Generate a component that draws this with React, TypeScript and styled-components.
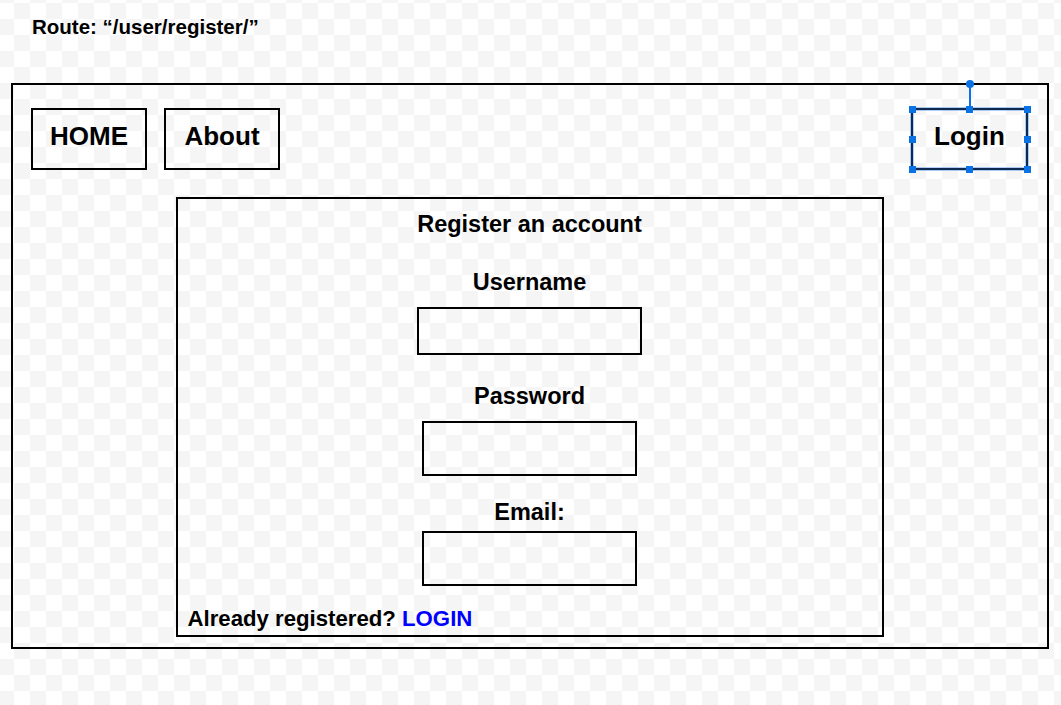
import React from 'react';
import styled, { createGlobalStyle } from 'styled-components';

const GlobalStyle = createGlobalStyle`
  html, body {
    margin: 0;
    padding: 0;
  }
  body {
    min-height: 100vh;
    font-family: "Liberation Sans", Arial, sans-serif;
    color: #000;
    background-color: #fff;
    background-image: repeating-conic-gradient(#f5f5f5 0 25%, #ffffff 0 50%);
    background-size: 32px 32px;
    background-position: -2px 3px;
  }
`;

const handles: [number, number][] = [
  [0, 0], [50, 0], [100, 0],
  [0, 50], [100, 50],
  [0, 100], [50, 100], [100, 100],
];

export default function App() {
  return (
    <>
      <GlobalStyle />
      <Div_Page>
        <H1_Route>Route: “/user/register/”</H1_Route>
        <Div_Frame>
          <Nav_Bar>
            <Div_NavGroup>
              <Button_Nav type="button">HOME</Button_Nav>
              <Button_Nav type="button">About</Button_Nav>
            </Div_NavGroup>
            <Button_Nav type="button" $width={117}>
              Login
              <Div_Selection>
                <Span_RotateLine />
                <Span_RotateKnob />
                {handles.map(([x, y]) => (
                  <Span_Handle key={`${x}-${y}`} $x={x} $y={y} />
                ))}
              </Div_Selection>
            </Button_Nav>
          </Nav_Bar>

          <Form_Panel onSubmit={(e) => e.preventDefault()}>
            <H2_Title>Register an account</H2_Title>

            <Label_Field $top={31}>Username</Label_Field>
            <Input_Box type="text" $top={11} $width={225} $height={48} />

            <Label_Field $top={28}>Password</Label_Field>
            <Input_Box type="password" $top={11} $width={215} $height={55} />

            <Label_Field $top={23}>Email:</Label_Field>
            <Input_Box type="email" $top={5} $width={215} $height={55} />

            <P_Footer>
              Already registered? <A_Login href="#">LOGIN</A_Login>
            </P_Footer>
          </Form_Panel>
        </Div_Frame>
      </Div_Page>
    </>
  );
}

const Div_Page = styled.div`
  display: flex;
  flex-direction: column;
  padding: 15px 0 0 11px;
`;

const H1_Route = styled.h1`
  margin: 0;
  padding-left: 21px;
  font-size: 20.5px;
  font-weight: 700;
  line-height: normal;
`;

const Div_Frame = styled.div`
  box-sizing: border-box;
  width: 1038px;
  height: 566px;
  margin-top: 44px;
  border: 2px solid #000;
  padding: 23px 19px 0 18px;
  display: flex;
  flex-direction: column;
`;

const Nav_Bar = styled.nav`
  display: flex;
  justify-content: space-between;
  align-items: flex-start;
`;

const Div_NavGroup = styled.div`
  display: flex;
  gap: 17px;
`;

const Button_Nav = styled.button<{ $width?: number }>`
  position: relative;
  box-sizing: border-box;
  width: ${(p) => p.$width ?? 116}px;
  height: 62px;
  padding: 0 0 5px;
  border: 2px solid #000;
  background: transparent;
  color: #000;
  font-family: "Liberation Sans", Arial, sans-serif;
  font-size: 26px;
  font-weight: 700;
  display: flex;
  align-items: center;
  justify-content: center;
  cursor: pointer;
`;

const Div_Selection = styled.div`
  position: absolute;
  inset: -2px;
  pointer-events: none;
  box-shadow:
    0 0 0 1px #a9c9f1,
    inset 0 0 0 3px rgba(40, 120, 230, 0.35);
`;

const Span_Handle = styled.span<{ $x: number; $y: number }>`
  position: absolute;
  width: 7px;
  height: 7px;
  background: #0b72e6;
  left: calc(${(p) => p.$x}% + ${(p) => 1 - p.$x / 50 - 3.5}px);
  top: calc(${(p) => p.$y}% + ${(p) => 1 - p.$y / 50 - 3.5}px);
`;

const Span_RotateLine = styled.span`
  position: absolute;
  left: calc(50% - 0.5px);
  top: -23px;
  width: 1.5px;
  height: 23px;
  background: #0b72e6;
`;

const Span_RotateKnob = styled.span`
  position: absolute;
  left: calc(50% - 4px);
  top: -28px;
  width: 8px;
  height: 8px;
  border-radius: 50%;
  background: #0b72e6;
`;

const Form_Panel = styled.form`
  box-sizing: border-box;
  align-self: center;
  width: 708px;
  height: 440px;
  margin: 27px 0 0;
  border: 2px solid #000;
  padding: 12px 0 0;
  display: flex;
  flex-direction: column;
  align-items: center;
`;

const H2_Title = styled.h2`
  margin: 0;
  font-size: 23.5px;
  font-weight: 700;
  line-height: normal;
`;

const Label_Field = styled.label<{ $top: number }>`
  margin-top: ${(p) => p.$top}px;
  font-size: 23.5px;
  font-weight: 700;
  line-height: normal;
`;

const Input_Box = styled.input<{ $top: number; $width: number; $height: number }>`
  box-sizing: border-box;
  margin-top: ${(p) => p.$top}px;
  width: ${(p) => p.$width}px;
  height: ${(p) => p.$height}px;
  border: 2px solid #000;
  border-radius: 0;
  background: transparent;
  padding: 0 8px;
  font-family: "Liberation Sans", Arial, sans-serif;
  font-size: 18px;
  outline: none;
`;

const P_Footer = styled.p`
  align-self: flex-start;
  margin: 20px 0 0;
  padding-left: 10px;
  font-size: 22.2px;
  font-weight: 700;
  line-height: normal;
`;

const A_Login = styled.a`
  color: #0000ff;
  text-decoration: none;
`;
